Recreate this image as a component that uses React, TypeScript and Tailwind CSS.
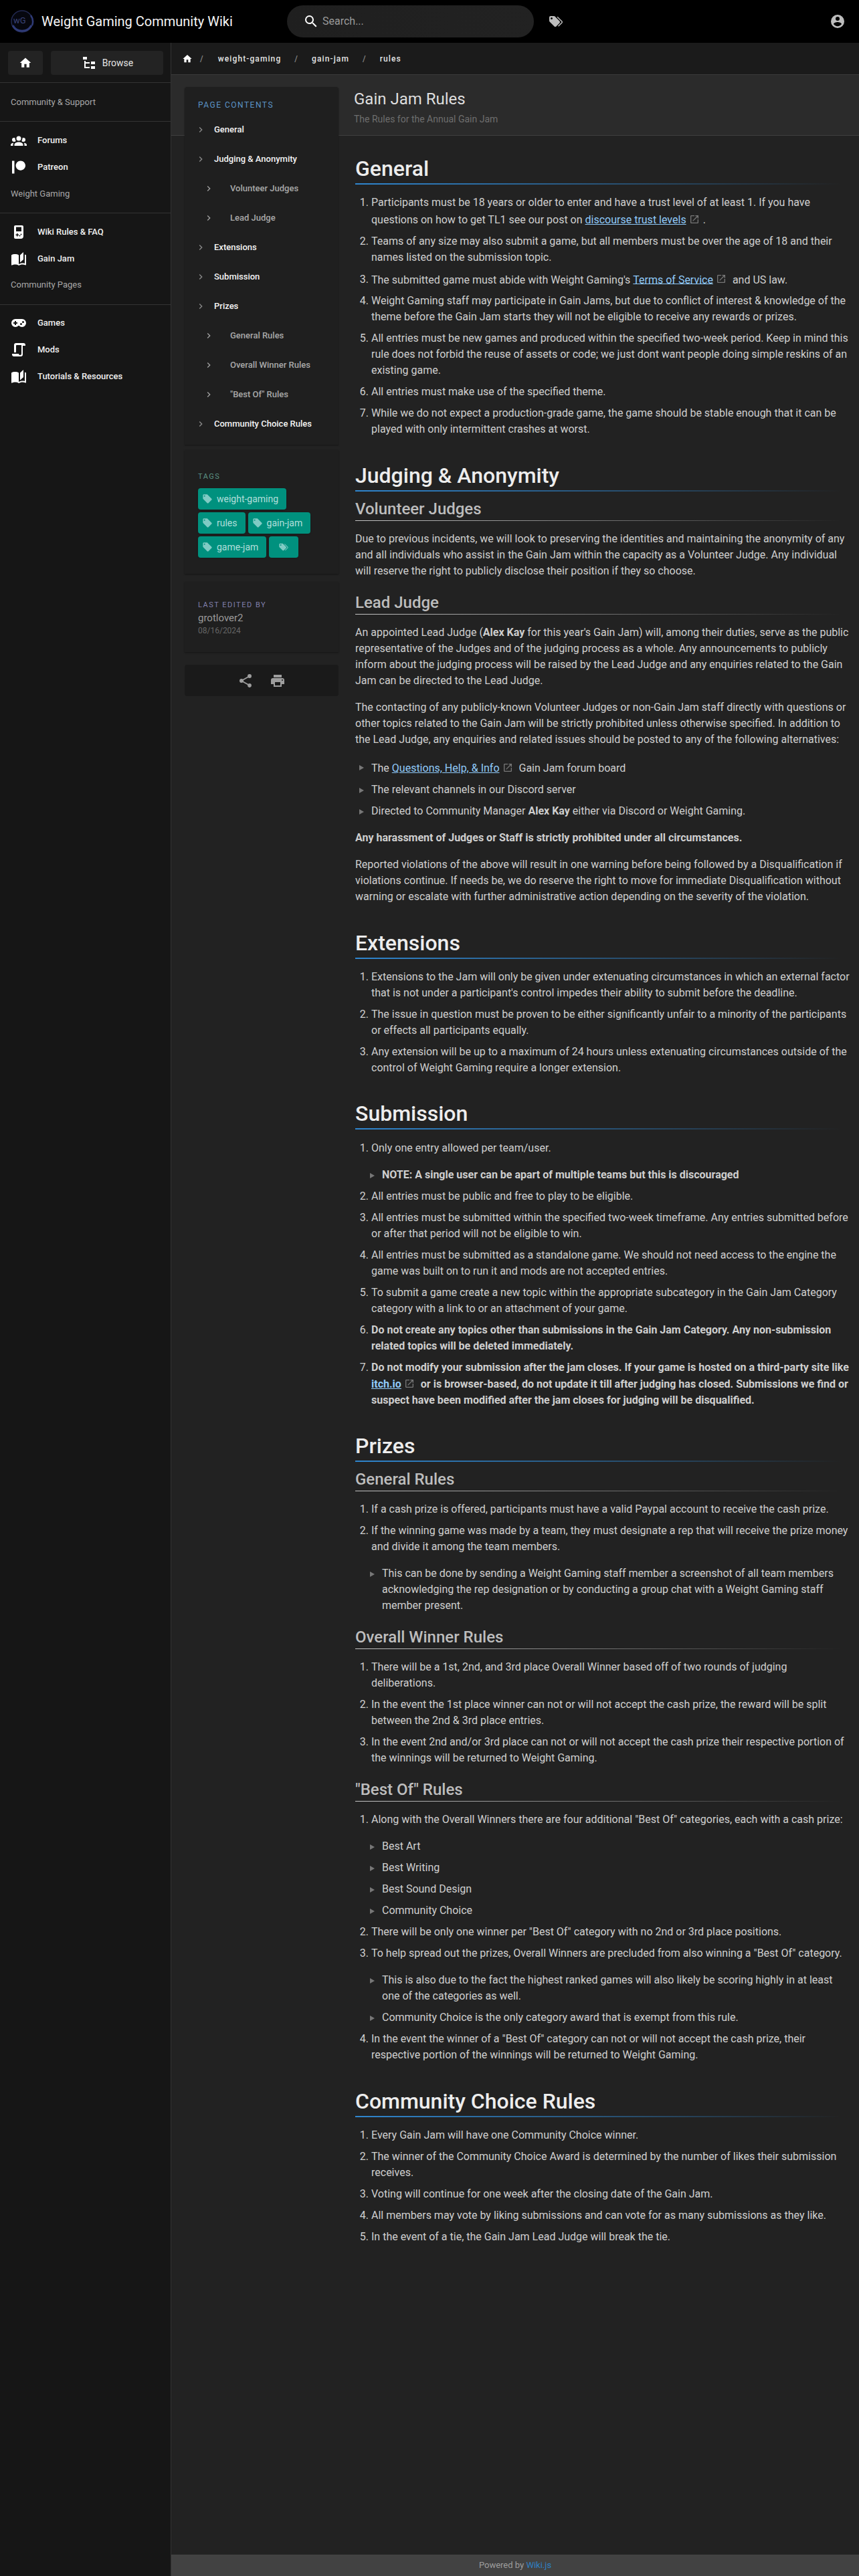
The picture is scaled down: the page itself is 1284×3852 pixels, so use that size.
import React from "react";

const P = {
  home: "M10,20V14H14V20H19V12H22L12,3L2,12H5V20H10Z",
  tree: "M3,3H9V7H3V3M15,10H21V14H15V10M15,17H21V21H15V17M13,13H7V18H13V20H7L5,20V9H7V11H13V13Z",
  search: "M9.5,3A6.5,6.5 0 0,1 16,9.5C16,11.11 15.41,12.59 14.44,13.73L14.71,14H15.5L20.5,19L19,20.5L14,15.5V14.71L13.73,14.44C12.59,15.41 11.11,16 9.5,16A6.5,6.5 0 0,1 3,9.5A6.5,6.5 0 0,1 9.5,3M9.5,5C7,5 5,7 5,9.5C5,12 7,14 9.5,14C12,14 14,12 14,9.5C14,7 12,5 9.5,5Z",
  tags: "M5.5,9A1.5,1.5 0 0,0 7,7.5A1.5,1.5 0 0,0 5.5,6A1.5,1.5 0 0,0 4,7.5A1.5,1.5 0 0,0 5.5,9M17.41,11.58C17.77,11.94 18,12.44 18,13C18,13.55 17.78,14.05 17.41,14.41L12.41,19.41C12.05,19.77 11.55,20 11,20C10.45,20 9.95,19.78 9.58,19.41L2.59,12.42C2.22,12.05 2,11.55 2,11V6C2,4.89 2.89,4 4,4H9C9.55,4 10.05,4.22 10.41,4.58L17.41,11.58M13.54,5.71L14.54,4.71L21.41,11.58C21.78,11.94 22,12.45 22,13C22,13.55 21.78,14.05 21.42,14.41L16.04,19.79L15.04,18.79L20.75,13L13.54,5.71Z",
  account: "M12,19.2C9.5,19.2 7.29,17.92 6,16C6.03,14 10,12.9 12,12.9C14,12.9 17.97,14 18,16C16.71,17.92 14.5,19.2 12,19.2M12,5A3,3 0 0,1 15,8A3,3 0 0,1 12,11A3,3 0 0,1 9,8A3,3 0 0,1 12,5M12,2A10,10 0 0,0 2,12A10,10 0 0,0 12,22A10,10 0 0,0 22,12A10,10 0 0,0 12,2Z",
  tag: "M5.5,7A1.5,1.5 0 0,1 4,5.5A1.5,1.5 0 0,1 5.5,4A1.5,1.5 0 0,1 7,5.5A1.5,1.5 0 0,1 5.5,7M21.41,11.58L12.41,2.58C12.05,2.22 11.55,2 11,2H4C2.89,2 2,2.89 2,4V11C2,11.55 2.22,12.05 2.59,12.41L11.58,21.41C11.95,21.77 12.45,22 13,22C13.55,22 14.05,21.77 14.41,21.41L21.41,14.41C21.78,14.05 22,13.55 22,13C22,12.44 21.77,11.94 21.41,11.58Z",
  share: "M18,16.08C17.24,16.08 16.56,16.38 16.04,16.85L8.91,12.7C8.96,12.47 9,12.24 9,12C9,11.76 8.96,11.53 8.91,11.3L15.96,7.19C16.5,7.69 17.21,8 18,8A3,3 0 0,0 21,5A3,3 0 0,0 18,2A3,3 0 0,0 15,5C15,5.24 15.04,5.47 15.09,5.7L8.04,9.81C7.5,9.31 6.79,9 6,9A3,3 0 0,0 3,12A3,3 0 0,0 6,15C6.79,15 7.5,14.69 8.04,14.19L15.16,18.34C15.11,18.55 15.08,18.77 15.08,19C15.08,20.61 16.39,21.91 18,21.91C19.61,21.91 20.92,20.61 20.92,19A2.92,2.92 0 0,0 18,16.08Z",
  printer: "M18,3H6V7H18M19,12A1,1 0 0,1 18,11A1,1 0 0,1 19,10A1,1 0 0,1 20,11A1,1 0 0,1 19,12M16,19H8V14H16M19,8H5A3,3 0 0,0 2,11V17H6V21H18V17H22V11A3,3 0 0,0 19,8Z",
  group: "M12,5.5A3.5,3.5 0 0,1 15.5,9A3.5,3.5 0 0,1 12,12.5A3.5,3.5 0 0,1 8.5,9A3.5,3.5 0 0,1 12,5.5M5,8C5.56,8 6.08,8.15 6.53,8.42C6.38,9.85 6.8,11.27 7.66,12.38C7.16,13.34 6.16,14 5,14A3,3 0 0,1 2,11A3,3 0 0,1 5,8M19,8A3,3 0 0,1 22,11A3,3 0 0,1 19,14C17.84,14 16.84,13.34 16.34,12.38C17.2,11.27 17.62,9.85 17.47,8.42C17.92,8.15 18.44,8 19,8M5.5,18.25C5.5,16.18 8.41,14.5 12,14.5C15.59,14.5 18.5,16.18 18.5,18.25V20H5.5V18.25M0,20V18.5C0,17.11 1.89,15.94 4.45,15.6C3.86,16.28 3.5,17.22 3.5,18.25V20H0M24,20H20.5V18.25C20.5,17.22 20.14,16.28 19.55,15.6C22.11,15.94 24,17.11 24,18.5V20Z",
  book: "M19 2L14 6.5V17.5L19 13V2M6.5 5C4.55 5 2.45 5.4 1 6.5V21.16C1 21.41 1.25 21.66 1.5 21.66C1.6 21.66 1.65 21.59 1.75 21.59C3.1 20.94 5.05 20.5 6.5 20.5C8.45 20.5 10.55 20.9 12 22C13.35 21.15 15.8 20.5 17.5 20.5C19.15 20.5 20.85 20.81 22.25 21.56C22.35 21.61 22.4 21.59 22.5 21.59C22.75 21.59 23 21.34 23 21.09V6.5C22.4 6.05 21.75 5.75 21 5.5V19C19.9 18.65 18.7 18.5 17.5 18.5C15.8 18.5 13.35 19.15 12 20V6.5C10.55 5.4 8.45 5 6.5 5Z",
  patreon: "M14.82 2.41C18.78 2.41 22 5.65 22 9.62C22 13.58 18.78 16.8 14.82 16.8C10.85 16.8 7.61 13.58 7.61 9.62C7.61 5.65 10.85 2.41 14.82 2.41M2 21.6H5.5V2.41H2V21.6Z",
  gamepad: "M7,6H17A6,6 0 0,1 23,12A6,6 0 0,1 17,18C15.22,18 13.63,17.23 12.53,16H11.47C10.37,17.23 8.78,18 7,18A6,6 0 0,1 1,12A6,6 0 0,1 7,6M6,9V11H4V13H6V15H8V13H10V11H8V9H6M15.5,12A1.5,1.5 0 0,0 14,13.5A1.5,1.5 0 0,0 15.5,15A1.5,1.5 0 0,0 17,13.5A1.5,1.5 0 0,0 15.5,12M18.5,9A1.5,1.5 0 0,0 17,10.5A1.5,1.5 0 0,0 18.5,12A1.5,1.5 0 0,0 20,10.5A1.5,1.5 0 0,0 18.5,9Z",
  script: "M14,20A2,2 0 0,0 16,18V5H9A1,1 0 0,0 8,6V16H5V5A3,3 0 0,1 8,2H19A3,3 0 0,1 22,5V6H18V18L18,19A3,3 0 0,1 15,22H5A3,3 0 0,1 2,19V18H12A2,2 0 0,0 14,20Z",
  gameboy: "M7 2H17A2 2 0 0 1 19 4V18A4 4 0 0 1 15 22H7A2 2 0 0 1 5 20V4A2 2 0 0 1 7 2M8 4.5V11H16V4.5H8M9 14V15.5H7.5V17H9V18.5H10.5V17H12V15.5H10.5V14H9M15.5 14.5A1 1 0 0 0 14.5 15.5A1 1 0 0 0 15.5 16.5A1 1 0 0 0 16.5 15.5A1 1 0 0 0 15.5 14.5M13.5 16.5A1 1 0 0 0 12.5 17.5A1 1 0 0 0 13.5 18.5A1 1 0 0 0 14.5 17.5A1 1 0 0 0 13.5 16.5Z",
  open: "M14,3V5H17.59L7.76,14.83L9.17,16.24L19,6.41V10H21V3M19,19H5V5H12V3H5C3.89,3 3,3.9 3,5V19A2,2 0 0,0 5,21H19A2,2 0 0,0 21,19V12H19V19Z",
  chevron: "M8.59,16.58L13.17,12L8.59,7.41L10,6L16,12L10,18L8.59,16.58Z",
};

function I({ d, className }: { d: string; className: string }) {
  return (
    <svg viewBox="0 0 24 24" className={className} fill="currentColor" fillRule="evenodd">
      <path d={d} />
    </svg>
  );
}

function Logo() {
  return (
    <svg viewBox="0 0 36 36" className="h-[36px] w-[36px] shrink-0">
      <circle cx="18" cy="18" r="16" fill="#06070f" stroke="#232a52" strokeWidth="1.5" />
      <path d="M4 24A16 16 0 0 0 32 24" fill="none" stroke="#2f3b77" strokeWidth="3" />
      <path d="M31 9A16 16 0 0 1 33 24" fill="none" stroke="#2f3b77" strokeWidth="2.5" />
      <text x="5" y="21" fontSize="13" fill="#3b4478" fontFamily="Roboto, sans-serif">wG</text>
    </svg>
  );
}

function NavItem({ d, label, size = "h-[24px] w-[24px]" }: { d: string; label: string; size?: string }) {
  return (
    <div className="flex h-[40px] items-center pl-[16px] text-[13px] font-medium text-[#f0f0f0]">
      <span className="mr-[16px] flex w-[24px] justify-center text-white">
        <I d={d} className={size} />
      </span>
      {label}
    </div>
  );
}

function Sub({ label, className }: { label: string; className: string }) {
  return <div className={`flex items-start pl-[16px] text-[13px] leading-[18px] text-[#a8a8a8] ${className}`}>{label}</div>;
}

function Toc({ label, sub }: { label: string; sub?: boolean }) {
  return (
    <div className={`flex h-[44px] items-center ${sub ? "pl-[28px]" : "pl-[16px]"}`}>
      <I d={P.chevron} className={`h-[16px] w-[16px] ${sub ? "mr-[24px] text-[#a0a0a0]" : "mr-[12px] text-[#8a8a8a]"}`} />
      <span className={`text-[13px] ${sub ? "font-medium text-[#a8a8a8]" : "font-medium text-[#f4f4f4]"}`}>{label}</span>
    </div>
  );
}

function Tag({ label }: { label?: string }) {
  return (
    <span className={`flex h-[32px] items-center rounded-[4px] bg-[#00917e] text-[14px] text-[#b2dfdb] shadow-sm ${label ? "pl-[6px] pr-[12px]" : "w-[44px] justify-center"}`}>
      <I d={label ? P.tag : P.tags} className={`h-[16px] w-[16px] text-[#80cbc4] ${label ? "mr-[6px]" : ""}`} />
      {label}
    </span>
  );
}

function H1({ children, className = "mt-[36px]" }: { children: React.ReactNode; className?: string }) {
  return (
    <div className={className}>
      <h1 className="h-[40px] text-[32px] font-medium leading-[40px] text-[#ededed]">{children}</h1>
      <div className="mt-[2px] h-[2px] w-[98%] bg-gradient-to-r from-[#2f86cf] to-[#2f86cf00]" />
    </div>
  );
}

function H2({ children, className = "mt-[20px]" }: { children: React.ReactNode; className?: string }) {
  return (
    <div className={className}>
      <h2 className="h-[30px] text-[24px] font-medium leading-[30px] text-[#bdbdbd]">{children}</h2>
      <div className="mt-[2px] h-[1px] w-[98%] bg-gradient-to-r from-[#c4c4c4] to-[#c4c4c400]" />
    </div>
  );
}

function Ext({ children }: { children: string }) {
  return (
    <>
      <span className="inline-block h-[18.5px] w-0" />
      <a className="text-[#90caf9] underline">{children}</a>
      <I d={P.open} className="ml-[4px] mr-[5px] inline-block h-[16px] w-[16px] align-[-2px] text-[#777]" />
    </>
  );
}

function Arrow() {
  return <span className="absolute left-[-18px] top-[9px] h-0 w-0 border-y-[4px] border-l-[7px] border-y-transparent border-l-[#777]" />;
}

function Ol({ items, className = "mt-[15px]" }: { items: React.ReactNode[]; className?: string }) {
  return (
    <ol className={`${className} list-decimal pl-[24px] marker:text-[#d0d0d0]`}>
      {items.map((x, i) => (
        <li key={i} className={i ? "mt-[8px]" : ""}>{x}</li>
      ))}
    </ol>
  );
}

function Ul({ items, className = "mt-[16px]", nested }: { items: React.ReactNode[]; className?: string; nested?: boolean }) {
  return (
    <ul className={`${className} ${nested ? "pl-[16px]" : "pl-[24px]"}`}>
      {items.map((x, i) => (
        <li key={i} className={`relative ${i ? "mt-[8px]" : ""}`}>
          <Arrow />
          {x}
        </li>
      ))}
    </ul>
  );
}

const F = "font-['Roboto',sans-serif]";

export default function App() {
  return (
    <div className={`${F} flex min-h-[3852px] flex-col bg-[#222222]`}>
      <header className="flex h-[64px] shrink-0 items-center bg-black">
        <div className="flex w-[429px] shrink-0 items-center pl-[15px]">
          <Logo />
          <span className="ml-[11px] text-[20px] text-[#f5f5f5]">Weight Gaming Community Wiki</span>
        </div>
        <div className="flex h-[48px] w-[369px] items-center rounded-[24px] bg-gradient-to-r from-[#1f1f1f] to-[#222] pl-[24px]">
          <I d={P.search} className="h-[24px] w-[24px] text-white" />
          <span className="ml-[5px] text-[16px] text-[#9a9a9a]">Search...</span>
        </div>
        <I d={P.tags} className="ml-[21px] h-[24px] w-[24px] text-[#bdbdbd]" />
        <I d={P.account} className="ml-auto mr-[20px] h-[24px] w-[24px] text-[#bdbdbd]" />
      </header>
      <div className="flex flex-1">
        <aside className="w-[256px] shrink-0 border-r border-[#333] bg-[#161616]">
          <div className="flex h-[60px] items-start gap-[12px] border-b border-[#333] pl-[12px] pt-[12px]">
            <div className="flex h-[36px] w-[52px] items-center justify-center rounded-[4px] bg-[#232323]">
              <I d={P.home} className="h-[20px] w-[20px] text-white" />
            </div>
            <div className="flex h-[36px] w-[168px] items-center justify-center rounded-[4px] bg-[#232323] text-[14px] text-[#e4e4e4]">
              <I d={P.tree} className="mr-[8px] h-[24px] w-[24px] text-white" />
              Browse
            </div>
          </div>
          <Sub label="Community & Support" className="h-[57px] pt-[20px]" />
          <div className="border-t border-[#333]" />
          <div className="pt-[8px]">
            <NavItem d={P.group} label="Forums" />
            <NavItem d={P.patreon} label="Patreon" />
          </div>
          <Sub label="Weight Gaming" className="h-[48px] pt-[11px]" />
          <div className="border-t border-[#333]" />
          <div className="pt-[8px]">
            <NavItem d={P.gameboy} label="Wiki Rules & FAQ" size="h-[26px] w-[26px]" />
            <NavItem d={P.book} label="Gain Jam" />
          </div>
          <Sub label="Community Pages" className="h-[48px] pt-[10px]" />
          <div className="border-t border-[#333]" />
          <div className="pt-[7px]">
            <NavItem d={P.gamepad} label="Games" />
            <NavItem d={P.script} label="Mods" />
            <NavItem d={P.book} label="Tutorials & Resources" />
          </div>
        </aside>
        <div className="flex min-w-0 flex-1 flex-col">
          <nav className="flex h-[48px] shrink-0 items-center border-b border-[#3a3a3a] bg-[#1b1b1b] pl-[16px] text-[12px] font-medium tracking-[1.1px] text-[#e4e4e4]">
            <I d={P.home} className="h-[16px] w-[16px] text-white" />
            <span className="ml-[11px] mr-[21px] text-[#888]">/</span>
            <span>weight-gaming</span>
            <span className="ml-[20px] mr-[20px] text-[#888]">/</span>
            <span>gain-jam</span>
            <span className="ml-[20px] mr-[20px] text-[#888]">/</span>
            <span>rules</span>
          </nav>
          <div className="flex h-[91px] shrink-0 flex-col border-b border-[#3f3f3f] bg-[#2b2b2b] pl-[273px]">
            <div className="mt-[20px] text-[24px] leading-[32px] text-[#dedede]">Gain Jam Rules</div>
            <div className="mt-[4px] text-[14px] leading-[20px] text-[#6e6e6e]">The Rules for the Annual Gain Jam</div>
          </div>
          <div className="flex flex-1">
            <div className="relative z-10 -mt-[73px] w-[275px] shrink-0 pl-[20px] pr-[25px]">
              <div className="h-[535px] rounded-t-[4px] bg-[#1f1f1f] pt-[17px] shadow-[0_1px_2px_#151515]">
                <div className="pl-[20px] text-[12px] leading-[20px] tracking-[1.5px] text-[#5b94c8]">PAGE CONTENTS</div>
                <div className="mt-[5px]">
                  <Toc label="General" />
                  <Toc label="Judging & Anonymity" />
                  <Toc label="Volunteer Judges" sub />
                  <Toc label="Lead Judge" sub />
                  <Toc label="Extensions" />
                  <Toc label="Submission" />
                  <Toc label="Prizes" />
                  <Toc label="General Rules" sub />
                  <Toc label="Overall Winner Rules" sub />
                  <Toc label='"Best Of" Rules' sub />
                  <Toc label="Community Choice Rules" />
                </div>
              </div>
              <div className="mt-[8px] h-[185px] bg-[#1f1f1f] pl-[20px] pr-[20px] pt-[30px] shadow-[0_1px_2px_#151515]">
                <div className="text-[11px] leading-[20px] tracking-[1.5px] text-[#5c9284]">TAGS</div>
                <div className="mt-[7px] flex flex-wrap gap-x-[4px] gap-y-[4px]">
                  <Tag label="weight-gaming" />
                  <Tag label="rules" />
                  <Tag label="gain-jam" />
                  <Tag label="game-jam" />
                  <Tag />
                </div>
              </div>
              <div className="mt-[12px] h-[105px] bg-[#1f1f1f] pl-[20px] pt-[25px] shadow-[0_1px_2px_#151515]">
                <div className="text-[11px] leading-[20px] tracking-[1.5px] text-[#8080ad]">LAST EDITED BY</div>
                <div className="text-[15px] leading-[18px] text-[#9a9a9a]">grotlover2</div>
                <div className="mt-[1px] text-[12px] leading-[18px] text-[#666]">08/16/2024</div>
              </div>
              <div className="mt-[19px] flex h-[47px] items-center rounded-[4px] bg-[#1a1a1a] pl-[79px]">
                <I d={P.share} className="h-[24px] w-[24px] text-[#9e9e9e]" />
                <I d={P.printer} className="ml-[24px] h-[24px] w-[24px] text-[#9e9e9e]" />
              </div>
            </div>
            <main className="min-w-0 flex-1 pr-[12px] pt-[29px] text-[16px] leading-[24px] text-[#cfcfcf]">
              <H1 className="">General</H1>
              <Ol
                items={[
                  <>Participants must be 18 years or older to enter and have a trust level of at least 1. If you have questions on how to get TL1 see our post on <Ext>discourse trust levels</Ext>.</>,
                  "Teams of any size may also submit a game, but all members must be over the age of 18 and their names listed on the submission topic.",
                  <>The submitted game must abide with Weight Gaming's <Ext>Terms of Service</Ext> and US law.</>,
                  "Weight Gaming staff may participate in Gain Jams, but due to conflict of interest & knowledge of the theme before the Gain Jam starts they will not be eligible to receive any rewards or prizes.",
                  "All entries must be new games and produced within the specified two-week period. Keep in mind this rule does not forbid the reuse of assets or code; we just dont want people doing simple reskins of an existing game.",
                  "All entries must make use of the specified theme.",
                  "While we do not expect a production-grade game, the game should be stable enough that it can be played with only intermittent crashes at worst.",
                ]}
              />
              <H1 className="mt-[37px]">Judging &amp; Anonymity</H1>
              <H2 className="mt-[11px]">Volunteer Judges</H2>
              <p className="mt-[15px]">Due to previous incidents, we will look to preserving the identities and maintaining the anonymity of any and all individuals who assist in the Gain Jam within the capacity as a Volunteer Judge. Any individual will reserve the right to publicly disclose their position if they so choose.</p>
              <H2>Lead Judge</H2>
              <p className="mt-[15px]">An appointed Lead Judge (<strong>Alex Kay</strong> for this year's Gain Jam) will, among their duties, serve as the public representative of the Judges and of the judging process as a whole. Any announcements to publicly inform about the judging process will be raised by the Lead Judge and any enquiries related to the Gain Jam can be directed to the Lead Judge.</p>
              <p className="mt-[16px]">The contacting of any publicly-known Volunteer Judges or non-Gain Jam staff directly with questions or other topics related to the Gain Jam will be strictly prohibited unless otherwise specified. In addition to the Lead Judge, any enquiries and related issues should be posted to any of the following alternatives:</p>
              <Ul
                className="mt-[17px]"
                items={[
                  <>The <Ext>Questions, Help, &amp; Info</Ext> Gain Jam forum board</>,
                  "The relevant channels in our Discord server",
                  <>Directed to Community Manager <strong>Alex Kay</strong> either via Discord or Weight Gaming.</>,
                ]}
              />
              <p className="mt-[16px]"><strong>Any harassment of Judges or Staff is strictly prohibited under all circumstances.</strong></p>
              <p className="mt-[16px]">Reported violations of the above will result in one warning before being followed by a Disqualification if violations continue. If needs be, we do reserve the right to move for immediate Disqualification without warning or escalate with further administrative action depending on the severity of the violation.</p>
              <H1 className="mt-[37px]">Extensions</H1>
              <Ol
                items={[
                  "Extensions to the Jam will only be given under extenuating circumstances in which an external factor that is not under a participant's control impedes their ability to submit before the deadline.",
                  "The issue in question must be proven to be either significantly unfair to a minority of the participants or effects all participants equally.",
                  "Any extension will be up to a maximum of 24 hours unless extenuating circumstances outside of the control of Weight Gaming require a longer extension.",
                ]}
              />
              <H1>Submission</H1>
              <Ol
                className="mt-[16px]"
                items={[
                  <>Only one entry allowed per team/user.<Ul nested items={[<strong>NOTE: A single user can be apart of multiple teams but this is discouraged</strong>]} /></>,
                  "All entries must be public and free to play to be eligible.",
                  "All entries must be submitted within the specified two-week timeframe. Any entries submitted before or after that period will not be eligible to win.",
                  "All entries must be submitted as a standalone game. We should not need access to the engine the game was built on to run it and mods are not accepted entries.",
                  "To submit a game create a new topic within the appropriate subcategory in the Gain Jam Category category with a link to or an attachment of your game.",
                  <strong>Do not create any topics other than submissions in the Gain Jam Category. Any non-submission related topics will be deleted immediately.</strong>,
                  <strong>Do not modify your submission after the jam closes. If your game is hosted on a third-party site like <Ext>itch.io</Ext> or is browser-based, do not update it till after judging has closed. Submissions we find or suspect have been modified after the jam closes for judging will be disqualified.</strong>,
                ]}
              />
              <H1>Prizes</H1>
              <H2 className="mt-[11px]">General Rules</H2>
              <Ol
                items={[
                  "If a cash prize is offered, participants must have a valid Paypal account to receive the cash prize.",
                  <>If the winning game was made by a team, they must designate a rep that will receive the prize money and divide it among the team members.<Ul nested items={["This can be done by sending a Weight Gaming staff member a screenshot of all team members acknowledging the rep designation or by conducting a group chat with a Weight Gaming staff member present."]} /></>,
                ]}
              />
              <H2>Overall Winner Rules</H2>
              <Ol
                items={[
                  "There will be a 1st, 2nd, and 3rd place Overall Winner based off of two rounds of judging deliberations.",
                  "In the event the 1st place winner can not or will not accept the cash prize, the reward will be split between the 2nd & 3rd place entries.",
                  "In the event 2nd and/or 3rd place can not or will not accept the cash prize their respective portion of the winnings will be returned to Weight Gaming.",
                ]}
              />
              <H2>"Best Of" Rules</H2>
              <Ol
                items={[
                  <>Along with the Overall Winners there are four additional "Best Of" categories, each with a cash prize:<Ul nested items={["Best Art", "Best Writing", "Best Sound Design", "Community Choice"]} /></>,
                  'There will be only one winner per "Best Of" category with no 2nd or 3rd place positions.',
                  <>To help spread out the prizes, Overall Winners are precluded from also winning a "Best Of" category.<Ul nested items={["This is also due to the fact the highest ranked games will also likely be scoring highly in at least one of the categories as well.", "Community Choice is the only category award that is exempt from this rule."]} /></>,
                  'In the event the winner of a "Best Of" category can not or will not accept the cash prize, their respective portion of the winnings will be returned to Weight Gaming.',
                ]}
              />
              <H1 className="mt-[37px]">Community Choice Rules</H1>
              <Ol
                items={[
                  "Every Gain Jam will have one Community Choice winner.",
                  "The winner of the Community Choice Award is determined by the number of likes their submission receives.",
                  "Voting will continue for one week after the closing date of the Gain Jam.",
                  "All members may vote by liking submissions and can vote for as many submissions as they like.",
                  "In the event of a tie, the Gain Jam Lead Judge will break the tie.",
                ]}
              />
            </main>
          </div>
          <footer className="flex h-[32px] shrink-0 items-center justify-center bg-[#424242] text-[13px] text-[#9e9e9e]">
            Powered by&nbsp;<span className="text-[#2f80c2]">Wiki.js</span>
          </footer>
        </div>
      </div>
    </div>
  );
}
